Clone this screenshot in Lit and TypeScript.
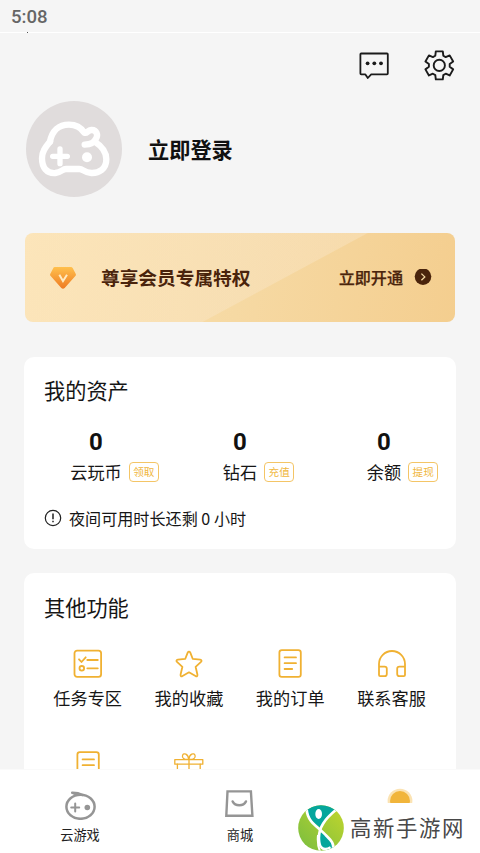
import { LitElement, html, svg, css, type TemplateResult } from "lit";
import { customElement, property } from "lit/decorators.js";

const gearPath = (() => {
  const tooth: [number, number][] = [
    [-4, -9.7],
    [-3.5, -14],
    [3.5, -14],
    [4, -9.7],
  ];
  const pts: string[] = [];
  for (let i = 0; i < 6; i++) {
    const a = (i * Math.PI) / 3;
    for (const [x, y] of tooth) {
      const px = x * Math.cos(a) - y * Math.sin(a);
      const py = x * Math.sin(a) + y * Math.cos(a);
      pts.push(`${px.toFixed(2)} ${py.toFixed(2)}`);
    }
  }
  return `M${pts.join("L")}Z`;
})();

const sheet = svg`
  <rect x="5.4" y="2.2" width="21.4" height="26.6" rx="2.4"/>
  <path d="M10.6 9.4H22M10.6 15.2H22M10.6 21H18.2"/>`;

const glyphs: Record<string, TemplateResult> = {
  chat: svg`<g stroke-width="1.8">
    <path d="M3.2 4.5H29Q29.8 4.5 29.8 5.3V24.6Q29.8 25.4 29 25.4H13.2L9.8 29L7.4 25.4H3.2Q2.4 25.4 2.4 24.6V5.3Q2.4 4.5 3.2 4.5Z"/>
    <g fill="currentColor" stroke="none"><circle cx="9.6" cy="14.3" r="1.9"/><circle cx="16.3" cy="14.3" r="1.9"/><circle cx="23" cy="14.3" r="1.9"/></g></g>`,
  gear: svg`<g stroke-width="1.9" transform="translate(16.3 16.4)"><path d=${gearPath}/><circle r="5.6"/></g>`,
  tasks: svg`
    <rect x="2.5" y="2.6" width="26.6" height="26.2" rx="2.6"/>
    <path d="M7 11.3L9.5 14L13.7 9.3M15.3 12H25.8M15.3 20.3H25.8"/><circle cx="9.8" cy="20.3" r="2.3"/>`,
  star: svg`<path d="M16 3.6C16.6 3.6 17 4 17.3 4.6L19.7 10.8L27.2 11.6C28.6 11.8 29 12.9 28 13.8L22.6 18.8L24.4 26.5C24.7 28.2 23.8 28.8 22.5 28L16 24.3L9.5 28C8.2 28.8 7.3 28.2 7.6 26.5L9.4 18.8L4 13.8C3 12.9 3.4 11.8 4.8 11.6L12.3 10.8L14.7 4.6C15 4 15.4 3.6 16 3.6Z"/>`,
  order: sheet,
  records: sheet,
  support: svg`<path d="M3 18.8V16A13 13 0 0 1 29 16V18.8M3 18.6H8.6Q10.8 18.6 10.8 20.8V26Q10.8 28.2 8.6 28.2H4.2Q3 28.2 3 27V18.6ZM29 18.6H23.4Q21.2 18.6 21.2 20.8V26Q21.2 28.2 23.4 28.2H27.8Q29 28.2 29 27V18.6Z"/>`,
  gift: svg`<g stroke-width="1.3">
    <rect x="1.8" y="9.6" width="28" height="4.6"/><path d="M4.4 14.2V30H27.2V14.2M16 9.6V30"/>
    <path d="M15.8 9.4C11 9.8 8.6 7.8 9.6 5.2C10.8 2.6 15 3.4 15.8 9.4C16.6 3.4 20.8 2.6 22 5.2C23 7.8 20.6 9.8 15.8 9.4Z"/></g>`,
  cloudGame: svg`<g stroke-width="2.5">
    <ellipse cx="16.5" cy="18.8" rx="14.1" ry="12"/><path d="M8.2 4.7Q14 4.6 18.6 7M9.5 5.4L14.5 6.8"/>
    <path d="M7.2 19.5H15.2M11.2 15.5V23.5" stroke-width="2"/><circle cx="23.3" cy="19.5" r="2.8" fill="currentColor" stroke="none"/></g>`,
  shop: svg`<g stroke-width="2.4" stroke-linejoin="miter">
    <path d="M3.5 3.4H26.9L28.4 27.8H2.3Z"/><path d="M8.6 13.4C11.2 18.6 19.4 18.6 22 13.4"/></g>`,
  mine: svg`<g stroke="none"><circle cx="16" cy="13.1" r="12.4" fill="#fbe3b3"/><circle cx="16" cy="13.1" r="10" fill="#f1b53b"/></g>`,
};

@customElement("ui-glyph")
class UiGlyph extends LitElement {
  @property() name = "";
  static styles = css`
    :host { display: block; width: 32px; height: 32px; flex: none; }
    svg { display: block; }
  `;
  render() {
    return html`<svg width="32" height="32" viewBox="0 0 32 32" fill="none" stroke="currentColor"
      stroke-width="1.8" stroke-linecap="round" stroke-linejoin="round">${glyphs[this.name]}</svg>`;
  }
}

const assets = [
  { label: "云玩币", action: "领取" },
  { label: "钻石", action: "充值" },
  { label: "余额", action: "提现" },
];

const features = [
  { icon: "tasks", label: "任务专区" },
  { icon: "star", label: "我的收藏" },
  { icon: "order", label: "我的订单" },
  { icon: "support", label: "联系客服" },
  { icon: "records", label: "" },
  { icon: "gift", label: "" },
];

@customElement("app-root")
class AppRoot extends LitElement {
  static styles = css`
    :host {
      display: flex; flex-direction: column; position: relative;
      height: 853px; width: 480px; overflow: hidden; box-sizing: border-box;
      background: #f5f5f5; color: #161616;
      font-family: "Noto Sans CJK SC", "Noto Sans", sans-serif;
    }
    * { box-sizing: border-box; }
    svg { display: block; flex: none; }
    .status {
      flex: none; height: 33px; padding: 1px 0 0 11px; border-bottom: 1px solid #fff;
      font: 500 18.6px/32px Roboto, sans-serif; color: #666;
    }
    .notch { width: 1px; height: 1px; margin-left: 27px; margin-top: -1px; background: #555; flex: none; }
    main { flex: 1; min-height: 0; overflow: hidden; display: flex; flex-direction: column; }
    main > * { flex: none; }
    .actions { display: flex; justify-content: flex-end; gap: 33px; padding: 16px 25px 0 0; color: #1b1b1b; }
    .profile { display: flex; align-items: center; gap: 26px; margin: 20px 0 0 26px; }
    .login { font-size: 21.2px; line-height: 30px; font-weight: 700; color: #111; }
    .vip {
      display: flex; align-items: center; height: 89px; margin: 36px 25px 0; padding: 0 23px 0 25px;
      border-radius: 8px; color: #4a240c;
      background:
        linear-gradient(151.7deg, rgba(250, 232, 205, .38) 162px, rgba(250, 232, 205, 0) 163px),
        linear-gradient(98deg, #fde3ae, #f6d9a3 50%, #f4ce8f);
    }
    .vip-title { margin-left: 25px; padding-bottom: 2px; font-size: 18.7px; line-height: 28px; font-weight: 700; }
    .vip-go { margin-left: auto; margin-right: 11px; padding-bottom: 1px; font-size: 16.1px; line-height: 24px; font-weight: 500; -webkit-text-stroke: .25px currentColor; }
    .card { margin: 0 24px; background: #fff; border-radius: 10px; }
    .card h2 { margin: 0; padding-left: 20px; font-size: 21.2px; line-height: 30px; font-weight: 400; }
    .wallet { height: 192px; margin-top: 34.5px; padding-top: 18px; }
    .assets { display: grid; grid-template-columns: repeat(3, 144px); margin-top: 21px; }
    .amount { text-align: center; font: 700 24px/32px Roboto, sans-serif; color: #111; }
    .asset-line { display: grid; grid-template-columns: 1fr auto 1fr; align-items: center; gap: 7px; height: 28px; }
    .asset-name { grid-column: 2; font-size: 17.2px; line-height: 26px; }
    .badge {
      width: 30px; height: 20px; border: 1.4px solid #f4c566; border-radius: 4px;
      font-size: 10.6px; line-height: 17px; text-align: center; color: #f0b63c; white-space: nowrap;
    }
    .note { display: flex; align-items: center; gap: 7px; margin: 20px 0 0 20px; font-size: 16.1px; line-height: 24px; }
    .note span { padding-bottom: 1px; }
    .more { height: 300px; margin-top: 24.5px; padding-top: 19px; }
    .features { display: grid; grid-template-columns: repeat(4, 101.3px); grid-auto-rows: 102px; margin: 26px 0 0 13px; }
    .feature { display: flex; flex-direction: column; align-items: center; color: #f0b132; }
    .feature span { margin-top: 5px; font-size: 17.2px; line-height: 26px; color: #161616; white-space: nowrap; }
    nav {
      flex: none; height: 84px; display: grid; grid-template-columns: repeat(3, 1fr);
      background: #fff; border-top: 1px solid #fafafa;
    }
    .tab { display: flex; flex-direction: column; align-items: center; padding-top: 18px; color: #959595; font-size: 13.2px; line-height: 20px; }
    .tab span { margin-top: 5px; color: #222; }
    .brand {
      position: absolute; left: 298px; bottom: 0; width: 182px; height: 50px; background: #fff;
      display: flex; align-items: center; gap: 6px;
    }
    .brand-name { padding-bottom: 2px; font-size: 21.4px; line-height: 30px; letter-spacing: 1.6px; color: #484848; white-space: nowrap; }
  `;

  render() {
    return html`
      <div class="status">5:08</div>
      <div class="notch"></div>
      <main>
        <div class="actions"><ui-glyph name="chat"></ui-glyph><ui-glyph name="gear"></ui-glyph></div>
        <div class="profile">
          <svg width="96" height="96" viewBox="0 0 288 288" fill="none" stroke="#fff" stroke-width="19" stroke-linecap="round" stroke-linejoin="round">
            <circle cx="144" cy="144" r="144" fill="#e0dcdc" stroke="none"/>
            <path d="M72 122C78 90 98 71 129 71C150 71 165 80 175 95C184 98 184 88 196 87C212 86 217 102 210 113C204 126 195 130 176 131"/>
            <path d="M206 122C228 136 241 152 241 175C241 205 218 217 196 216C172 214 172 204 160 204H120C108 204 108 214 88 216C62 218 48 200 48 172C48 150 60 137 72 122"/>
            <path d="M80 166H124M102 144V188" stroke-width="16"/>
            <circle cx="183" cy="169" r="15" fill="#fff" stroke="none"/>
          </svg>
          <div class="login">立即登录</div>
        </div>
        <div class="vip">
          <svg width="26" height="22" viewBox="0 0 78 66">
            <defs><linearGradient id="gem" x1="0" y1="0" x2="0" y2="1"><stop offset="0" stop-color="#ffc04d"/><stop offset="1" stop-color="#ee7a22"/></linearGradient></defs>
            <path d="M14 0H63Q66 0 68 3L77 20Q79 24 76 27L44 63Q39 68 34 63L2 27Q-1 24 1 20L10 3Q11 0 14 0Z" fill="url(#gem)"/>
            <path d="M28 23L39 42L51 23" fill="none" stroke="#ffeac2" stroke-width="6"/>
          </svg>
          <div class="vip-title">尊享会员专属特权</div>
          <div class="vip-go">立即开通</div>
          <svg width="18" height="18" viewBox="0 0 18 18"><circle cx="9" cy="7.6" r="8.3" fill="#4a240c"/><path d="M7.4 4.6L10.8 7.9L7.4 11.2" fill="none" stroke="#f5d9a6" stroke-width="1.3"/></svg>
        </div>
        <section class="card wallet">
          <h2>我的资产</h2>
          <div class="assets">
            ${assets.map((a) => html`<div>
              <div class="amount">0</div>
              <div class="asset-line"><span class="asset-name">${a.label}</span><span class="badge">${a.action}</span></div>
            </div>`)}
          </div>
          <div class="note">
            <svg width="18" height="18" viewBox="0 0 18 18" fill="none" stroke="#222"><circle cx="9" cy="9" r="7.7" stroke-width="1.2"/><path d="M9 4.5V10.2M9 11.8V13.2" stroke-width="1.5"/></svg>
            <span>夜间可用时长还剩 0 小时</span>
          </div>
        </section>
        <section class="card more">
          <h2>其他功能</h2>
          <div class="features">
            ${features.map((f) => html`<div class="feature"><ui-glyph name=${f.icon}></ui-glyph><span>${f.label}</span></div>`)}
          </div>
        </section>
      </main>
      <nav>
        <div class="tab"><ui-glyph name="cloudGame"></ui-glyph><span>云游戏</span></div>
        <div class="tab"><ui-glyph name="shop"></ui-glyph><span>商城</span></div>
        <div class="tab"><ui-glyph name="mine"></ui-glyph></div>
      </nav>
      <div class="brand">
        <svg width="46" height="46" viewBox="174 195 138 138">
          <defs>
            <clipPath id="disc"><circle cx="243" cy="264" r="68.5"/></clipPath>
            <linearGradient id="leaf" x1="0" y1="1" x2="1" y2="0"><stop offset="0" stop-color="#78bd40"/><stop offset="1" stop-color="#c3d62c"/></linearGradient>
          </defs>
          <g clip-path="url(#disc)">
            <rect x="174" y="195" width="138" height="138" fill="url(#leaf)"/>
            <path d="M200 210Q243 175 290 210Q262 230 242 264Q206 240 200 210Z" fill="#05a69c"/>
            <path d="M241 275Q282 302 280 325Q262 335 242 323Q237 300 241 275Z" fill="#05a69c"/>
            <g fill="none" stroke="#fff">
              <path d="M200 208C203 250 238 262 257 285C272 300 284 310 279 332" stroke-width="8"/>
              <path d="M290 208C256 236 234 262 237 300Q238 318 245 323Q255 332 272 322" stroke-width="8"/>
              <path d="M234 285Q231 312 240 334" stroke-width="6"/>
            </g>
            <ellipse cx="236" cy="222" rx="10" ry="15" fill="#fff"/>
          </g>
        </svg>
        <div class="brand-name">高新手游网</div>
      </div>
    `;
  }
}
